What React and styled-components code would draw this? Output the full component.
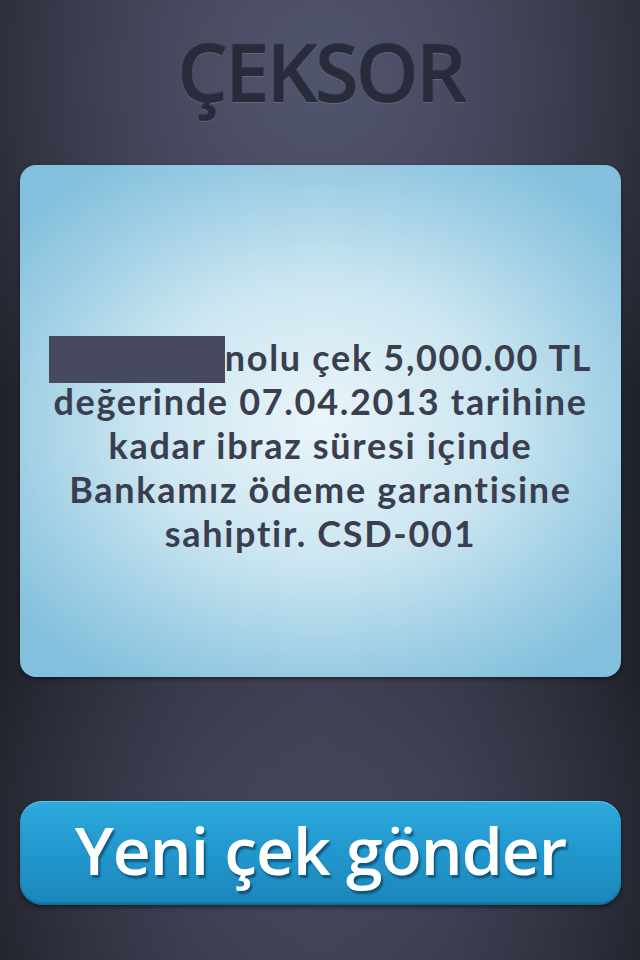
import styled, { createGlobalStyle } from 'styled-components'

const Global = createGlobalStyle`
  html, body {
    margin: 0;
    padding: 0;
  }
  body {
    background: #2a2c38;
    font-family: "Open Sans", "Noto Sans", sans-serif;
  }
`

const Screen = styled.div`
  width: 640px;
  height: 960px;
  box-sizing: border-box;
  padding: 0 19px 0 20px;
  display: flex;
  flex-direction: column;
  background:
    radial-gradient(ellipse 70% 45% at 50% 8%, rgba(84, 88, 112, 0.9), rgba(84, 88, 112, 0) 100%),
    radial-gradient(ellipse 60% 30% at 50% 88%, rgba(72, 74, 96, 0.8), rgba(72, 74, 96, 0) 100%),
    linear-gradient(to right, #20222b 0%, #343646 30%, #393b4c 50%, #343646 70%, #20222b 100%);
`

const Logo = styled.h1`
  margin: 0;
  height: 165px;
  display: flex;
  align-items: flex-start;
  justify-content: center;
  padding-top: 31px;
  box-sizing: border-box;
  font-size: 80px;
  font-weight: 600;
  letter-spacing: -3px;
  line-height: 1;
  color: #282b39;
  text-shadow: 0 1px 0 rgba(120, 125, 150, 0.5), 0 -1px 1px rgba(0, 0, 0, 0.4);
`

const Card = styled.div`
  height: 512px;
  border-radius: 16px;
  box-sizing: border-box;
  padding: 170px 0 0;
  background:
    radial-gradient(ellipse 65% 60% at 50% 50%, #eaf5fa 0%, #cce6f1 45%, #9ccde4 80%, #83c0dd 100%);
  box-shadow: 0 2px 4px rgba(0, 0, 0, 0.45);
`

const Message = styled.div`
  display: flex;
  flex-direction: column;
  align-items: center;
  font-family: Lato, "Open Sans", sans-serif;
  font-size: 36px;
  font-weight: 700;
  letter-spacing: 1.7px;
  color: #3a3e4e;
`

const Line = styled.div`
  height: 44px;
  line-height: 44px;
  white-space: nowrap;
`

const Redacted = styled.span`
  display: inline-block;
  width: 176px;
  height: 47px;
  background: #474a5e;
  vertical-align: -12px;
`

const Spacer = styled.div`
  height: 124px;
`

const Button = styled.button`
  height: 104px;
  width: 100%;
  border: none;
  border-radius: 22px;
  padding: 0 0 8px;
  cursor: pointer;
  font-family: "Open Sans", "Noto Sans", sans-serif;
  font-size: 66px;
  font-weight: 600;
  letter-spacing: -1px;
  color: #ffffff;
  text-shadow: 2px 3px 2px rgba(0, 40, 70, 0.55);
  background: linear-gradient(to bottom, #2eaadd 0%, #2299cf 45%, #1b86b9 100%);
  box-shadow:
    inset 0 1px 0 rgba(140, 215, 245, 0.6),
    inset 0 -2px 2px rgba(10, 60, 95, 0.4),
    0 2px 4px rgba(0, 0, 0, 0.5);
`

export default function App() {
  return (
    <Screen>
      <Global />
      <Logo>ÇEKSOR</Logo>
      <Card>
        <Message>
          <Line><Redacted />nolu çek 5,000.00 TL</Line>
          <Line>değerinde 07.04.2013 tarihine</Line>
          <Line>kadar ibraz süresi içinde</Line>
          <Line>Bankamız ödeme garantisine</Line>
          <Line>sahiptir. CSD-001</Line>
        </Message>
      </Card>
      <Spacer />
      <Button>Yeni çek gönder</Button>
    </Screen>
  )
}
